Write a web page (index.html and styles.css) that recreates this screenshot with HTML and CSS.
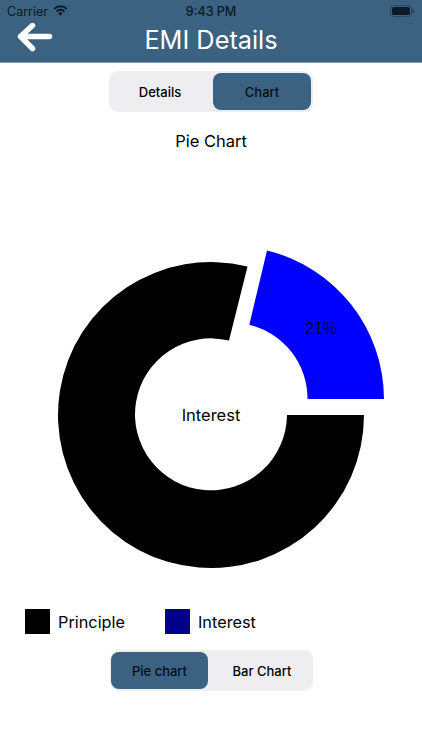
FILE: index.html
```html
<!DOCTYPE html>
<html lang="en">

<head>
    <meta charset="UTF-8">
    <meta name="viewport" content="width=device-width, initial-scale=1.0">
    <title>EMI Details</title>
    <link rel="stylesheet" href="styles.css">
</head>

<body>
    <header class="hd">
        <div class="st">
            <span class="st-l">
                Carrier
                <svg class="wifi" viewBox="0 0 16 12" width="15" height="11">
                    <path d="M8 11.6 5.6 9a3.4 3.4 0 0 1 4.8 0z" />
                    <path d="M4.4 7.8 3 6.3a7 7 0 0 1 10 0l-1.400 1.500a5 5 0 0 0-7.200 0z" />
                    <path d="M1.900 5.100.4 3.600a10.600 10.600 0 0 1 15.200 0l-1.500 1.500a8.500 8.500 0 0 0-12.200 0z" />
                </svg>
            </span>
            <span class="st-t">9:43 PM</span>
            <span class="st-r">
                <svg viewBox="0 0 25 12" width="25" height="12">
                    <rect class="bat-o" x=".5" y=".5" width="21" height="11" rx="3" />
                    <rect x="2" y="2" width="18" height="8" rx="1.600" />
                    <rect class="bat-o" x="22.600" y="4" width="1.200" height="4" rx=".6" />
                </svg>
            </span>
        </div>
        <div class="nav">
            <svg class="back" viewBox="0 0 38 30" width="38" height="30">
                <path d="M34.500 13.500H6M17.500 2.500 5.500 13.500 17.500 25.500" />
            </svg>
            <h1>EMI Details</h1>
        </div>
    </header>

    <div class="sg top">
        <button class="wide">Details</button>
        <button class="on">Chart</button>
    </div>

    <h2>Pie Chart</h2>

    <div class="chart">
        <svg viewBox="0 0 422 441" width="422" height="441">
            <path d="M287 259H364A153 153 0 1 1 247.500 110.500L229 184.500A76 76 0 1 0 287 259Z" />
            <path class="blue" d="M384 243A153 153 0 0 0 267 94.500L249.300 168.700A76 76 0 0 1 307.500 243Z" />
            <text class="pct" x="321" y="178">21%</text>
            <text class="mid" x="211" y="265">Interest</text>
        </svg>
    </div>

    <div class="lg">
        <span class="lg-i"><i class="k"></i>Principle</span>
        <span class="lg-i"><i class="n"></i>Interest</span>
    </div>

    <div class="sg bottom">
        <button class="on">Pie chart</button>
        <button class="wide">Bar Chart</button>
    </div>
</body>

</html>
```

FILE: styles.css
```css
html {
    height: 100%;
}

body {
    margin: 0;
    height: 100%;
    background-color: #fff;
    color: #000;
    font-family: Inter, "Noto Sans", sans-serif;
    overflow: hidden;
}

.hd {
    height: 62px;
    background-color: #3b6280;
    border-bottom: 1px solid #7f9bb0;
    color: #fff;
}

.st {
    height: 22px;
    padding: 0 7px;
    display: flex;
    justify-content: space-between;
    align-items: center;
    font-size: 12.5px;
    color: #0b1a26;
}

.st span {
    flex: 1;
    display: flex;
    align-items: center;
}

.st-l {
    gap: 5px;
}

.st-t {
    justify-content: center;
    font-weight: 500;
}

.st-r {
    justify-content: flex-end;
}

.st svg {
    fill: #0b1a26;
}

.st svg.wifi {
    margin-top: -2px;
}

.st .bat-o {
    fill: none;
    stroke: #0b1a26;
    stroke-opacity: .35;
}

.nav {
    height: 40px;
    padding-left: 15px;
    display: grid;
    grid-template-columns: 38px 1fr 53px;
    align-items: center;
}

.back {
    fill: none;
    stroke: #fff;
    stroke-width: 5.5px;
    stroke-linecap: round;
    stroke-linejoin: round;
    margin-top: -8px;
}

h1 {
    margin: -4px 0 0;
    font-size: 25.3px;
    font-weight: 400;
    text-align: center;
    grid-column: 2;
    line-height: 34px;
}

.sg {
    width: 204px;
    height: 41px;
    box-sizing: border-box;
    padding: 2px;
    display: flex;
    background-color: #eeeef0;
    border-radius: 9px;
}

.sg button {
    flex: 0 0 98px;
    border: 0;
    padding: 0;
    background: none;
    color: #000;
    font-family: inherit;
    font-size: 13px;
    font-weight: 450;
    border-radius: 8px;
}

.sg button.wide {
    flex-basis: 102px;
}

.sg button.on {
    background-color: #3b6280;
    color: #060d14;
    font-weight: 500;
}

.top {
    margin: 8px 0 0 109px;
}

.top button.wide {
    padding-right: 4px;
}

h2 {
    margin: 17px 0 0;
    font-size: 16.5px;
    line-height: 24px;
    font-weight: 400;
    text-align: center;
}

.chart {
    margin-top: 3px;
    height: 441px;
}

.chart svg {
    display: block;
}

.chart path {
    fill: #000;
}

.chart path.blue {
    fill: #0000ff;
}

.pct {
    font-family: "Liberation Sans", sans-serif;
    font-size: 16px;
    text-anchor: middle;
    fill: #000033;
}

.mid {
    font-size: 16.5px;
    text-anchor: middle;
}

.lg {
    margin-top: 12px;
    padding-left: 25px;
    display: flex;
    font-size: 16.3px;
}

.lg-i {
    width: 140px;
    display: flex;
    align-items: center;
    gap: 8px;
}

.lg-i i {
    width: 25px;
    height: 25px;
    display: block;
}

.k {
    background-color: #000;
}

.n {
    background-color: #00008b;
}

.bottom {
    width: 203px;
    margin: 16px 0 0 110px;
    padding-left: 1px;
}

.bottom button.on {
    flex-basis: 97px;
}

.bottom button.wide {
    padding-left: 6px;
}
```
